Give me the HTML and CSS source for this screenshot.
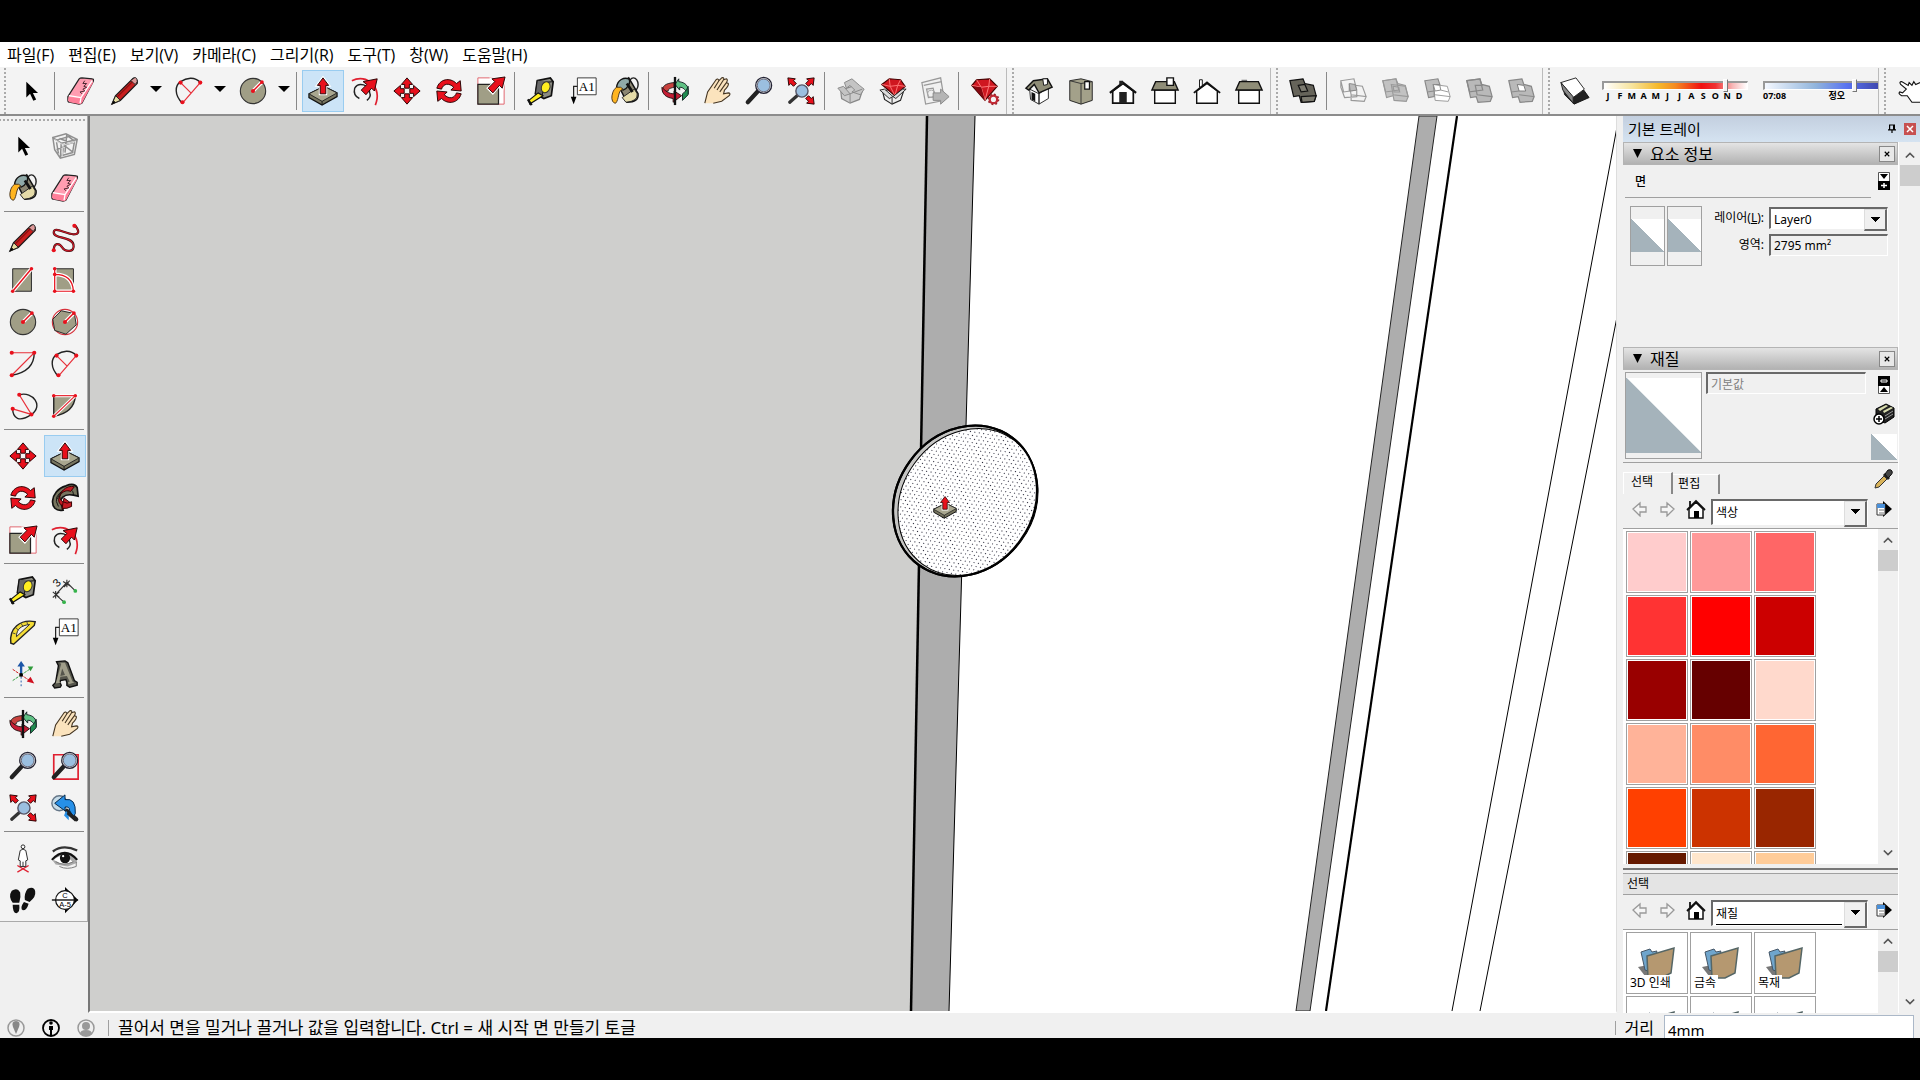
FILE: index.html
```html
<!DOCTYPE html>
<html lang="ko">

<head>
    <meta charset="UTF-8">
    <meta name="viewport" content="width=device-width, initial-scale=1.0">
    <title>SketchUp</title>
    <link rel="stylesheet" href="styles.css">
</head>

<body>
    <!-- Icon set -->
    <svg class="icon-defs" aria-hidden="true">
        <symbol id="i-select" viewBox="0 0 32 32">
            <path d="M11 6v17l4-4 3.500 7.500 3-1.500-3.500-7h5.500z" fill="#000" />
        </symbol>
        <symbol id="i-component" viewBox="0 0 32 32">
            <path d="M3 7l14-4 12 6-3 16-15 4-6-9zM3 7l9 6 17-4M12 13l-1 16M6 10l14-4 5 4M7 12l2 12M15 15l11-3-2 11-11 3zM10 8l8 3M18 3l-2 20M7 20l9-4 9 7" fill="none" stroke="#8f8f8f" stroke-width="1.600" />
            <path d="M5 9l9 6 12-3M14 15l-1 12" fill="none" stroke="#ddd" />
        </symbol>
        <symbol id="i-eraser" viewBox="0 0 32 32">
            <path d="M2 22L14 3q1-1 3-1l11 1q2 0 1 3L17 29q-1 1-3 1L4 28q-2 0-2-2z" fill="#ff9db1" stroke="#222" stroke-width="1.300" />
            <path d="M3 22l13 2L28 5l1 2-12 22-2 1-11-2-2-2z" fill="#ff7f99" />
            <path d="M3 21l13 2L28 5M16 23l-1 6" fill="none" stroke="#fff" stroke-width="1.400" />
            <path d="M20 5l-2 3 4 0-3 3 3 1-4 2 2 2-5 1 2 2" fill="none" stroke="#43222b" />
        </symbol>
        <symbol id="i-pencil" viewBox="0 0 32 32">
            <path d="M2 30l4-9L24 3q2-2 4 0t1 5L11 26z" fill="#c81e1e" stroke="#1b1b1b" stroke-width="1.300" />
            <path d="M2 30l4-9 5 5z" fill="#e9dfa5" stroke="#1b1b1b" />
            <path d="M2 30l2-4 2 2z" fill="#000" />
            <path d="M22 5l4-3q3-1 3 4l-2 3z" fill="#d99" stroke="#333" />
            <path d="M8 22L24 6" stroke="#811" stroke-width="1.500" />
        </symbol>
        <symbol id="i-freehand" viewBox="0 0 32 32">
            <path d="M27 3q7 9-2 9C17 12 4 3 4 10s19 4 21 13-9 8-12 3-9-5-9 3" fill="none" stroke="#3b1010" stroke-width="2.400" />
            <path d="M27 3q7 9-2 9C17 12 4 3 4 10s19 4 21 13-9 8-12 3-9-5-9 3" fill="none" stroke="#d01828" stroke-width="1.200" />
            <circle cx="26" cy="3" r="2.200" fill="#e8101c" />
            <circle cx="4" cy="29" r="2.200" fill="#e8101c" />
        </symbol>
        <symbol id="i-rect" viewBox="0 0 32 32">
            <path d="M5 4h20v24H5z" fill="#a09e86" stroke="#222" />
            <path d="M5 28L25 4" stroke="#fff" stroke-width="4" />
            <path d="M5 28L25 4" stroke="#e8101c" stroke-width="1.500" />
            <circle cx="5" cy="28" r="1.900" fill="#e8101c" />
            <circle cx="25" cy="4" r="1.900" fill="#e8101c" />
        </symbol>
        <symbol id="i-rotrect" viewBox="0 0 32 32">
            <path d="M5 4h20v24H5z" fill="#a09e86" stroke="#222" />
            <path d="M5 10q19 0 20 18H5V4" fill="none" stroke="#fff" stroke-width="4" />
            <path d="M5 10q19 0 20 18H5V4" fill="none" stroke="#e8101c" stroke-width="1.300" />
            <g fill="#e8101c">
                <circle cx="5" cy="4" r="1.900" />
                <circle cx="5" cy="10" r="1.900" />
                <circle cx="5" cy="28" r="1.900" />
                <circle cx="25" cy="28" r="1.900" />
            </g>
        </symbol>
        <symbol id="i-circle" viewBox="0 0 32 32">
            <circle cx="16" cy="16" r="13.500" fill="#a09e86" stroke="#333" stroke-width="1.200" />
            <path d="M16 16l9-9" stroke="#fff" stroke-width="4" />
            <path d="M16 16l9-9" stroke="#e8101c" stroke-width="1.500" />
            <circle cx="16" cy="16" r="2.200" fill="#e8101c" />
            <circle cx="25.500" cy="6.500" r="2" fill="#e8101c" />
        </symbol>
        <symbol id="i-polygon" viewBox="0 0 32 32">
            <circle cx="16" cy="16" r="13.500" fill="none" stroke="#d8303a" stroke-width="1.200" />
            <path d="M12 4l14 3 2 12-11 10L5 25 3 13z" fill="#a09e86" stroke="#222" />
            <path d="M16 16l9-9" stroke="#fff" stroke-width="4" />
            <path d="M16 16l9-9" stroke="#e8101c" stroke-width="1.500" />
            <circle cx="16" cy="16" r="2.200" fill="#e8101c" />
            <circle cx="25.500" cy="6.500" r="2" fill="#e8101c" />
        </symbol>
        <symbol id="i-arc" viewBox="0 0 32 32">
            <path d="M4 28Q28 24 28 4" fill="none" stroke="#222" stroke-width="1.500" />
            <path d="M4 4h24L4 28" fill="none" stroke="#e8303a" stroke-width="1.200" />
            <g fill="#e8101c">
                <circle cx="4" cy="4" r="2.200" />
                <circle cx="28" cy="4" r="2.200" />
                <circle cx="4" cy="28" r="2.200" />
            </g>
        </symbol>
        <symbol id="i-arc2" viewBox="0 0 32 32">
            <path d="M9 29C0 20 1 10 7 6S22 0 28 7" fill="none" stroke="#222" stroke-width="1.500" />
            <path d="M9 29L28 7M7 7l11 11" fill="none" stroke="#e8303a" stroke-width="1.300" />
            <g fill="#e8101c">
                <circle cx="7" cy="7" r="2.200" />
                <circle cx="28" cy="7" r="2.200" />
                <circle cx="9" cy="28" r="2.200" />
            </g>
        </symbol>
        <symbol id="i-arc3" viewBox="0 0 32 32">
            <path d="M12 4c15-4 26 12 13 21S5 29 5 19" fill="none" stroke="#222" stroke-width="1.500" />
            <path d="M12 4l13 21L5 19" fill="none" stroke="#e8303a" stroke-width="1.300" />
            <g fill="#e8101c">
                <circle cx="12" cy="4" r="2.200" />
                <circle cx="25" cy="25" r="2.200" />
                <circle cx="5" cy="19" r="2.200" />
            </g>
        </symbol>
        <symbol id="i-pie" viewBox="0 0 32 32">
            <path d="M4 5h23q-1 18-23 22z" fill="#a09e86" stroke="#222" stroke-width="1.500" />
            <path d="M4 5h23L4 27" fill="none" stroke="#fff" stroke-width="3.500" />
            <path d="M4 5h23L4 27" fill="none" stroke="#e8303a" stroke-width="1.300" />
            <g fill="#e8101c">
                <circle cx="4" cy="5" r="1.900" />
                <circle cx="27" cy="5" r="1.900" />
                <circle cx="4" cy="27" r="1.900" />
            </g>
        </symbol>
        <symbol id="i-pushpull" viewBox="0 0 32 32">
            <path d="M1 19l16-8 14 7v4L15 31 1 23z" fill="#77755f" stroke="#111" stroke-width="1.300" />
            <path d="M1 19l16-8 14 7-16 9z" fill="#a9a78f" stroke="#222" />
            <path d="M15 27v4" stroke="#111" />
            <path d="M16 2l6 8h-3v9h-6v-9h-3z" fill="#e8101c" stroke="#fff" stroke-width="3" />
            <path d="M16 2l6 8h-3v9h-6v-9h-3z" fill="#e8101c" stroke="#200" />
        </symbol>
        <symbol id="i-offset" viewBox="0 0 32 32">
            <path d="M2 5C18-3 35 12 27 31" fill="none" stroke="#e02030" stroke-width="1.800" />
            <path d="M5 13c4-7 16-4 16 5M18 26q5-4 3-8M5 13q-2 8 5 11" fill="none" stroke="#222" stroke-width="1.500" />
            <path d="M29 3l-3 13-3-3-6 7-5-5 6-6-4-3z" fill="#e8101c" stroke="#200" />
        </symbol>
        <symbol id="i-move" viewBox="0 0 32 32">
            <g fill="#e8101c" stroke="#200">
                <path d="M16 2l6 7h-3.500v4h-5V9H10z" />
                <path d="M16 30l6-7h-3.500v-4h-5v4H10z" />
                <path d="M2 16l7-6v3.500h4v5H9V22z" />
                <path d="M30 16l-7-6v3.500h-4v5h4V22z" />
            </g>
        </symbol>
        <symbol id="i-rotate" viewBox="0 0 32 32">
            <path d="M3 13C6 3 17 1 24 8l4-3 1 11-11-1 3-3C16 7 10 8 8 14z" fill="#e8101c" stroke="#200" />
            <path d="M29 19c-3 10-14 12-21 5l-4 3-1-11 11 1-3 3c5 5 11 4 13-2z" fill="#e8101c" stroke="#200" />
        </symbol>
        <symbol id="i-scale" viewBox="0 0 32 32">
            <path d="M2 2h28v28H2z" fill="#fff" stroke="#e0606a" />
            <path d="M2 9h22v21H2z" fill="#a09e86" stroke="#222" stroke-width="1.300" />
            <path d="M31 1l-3 12-3-3-7 8-5-5 7-7-3-3z" fill="#e8101c" stroke="#fff" stroke-width="3" />
            <path d="M31 1l-3 12-3-3-7 8-5-5 7-7-3-3z" fill="#e8101c" stroke="#200" />
        </symbol>
        <symbol id="i-follow" viewBox="0 0 32 32">
            <path d="M14 29C-2 32-1 8 17 3c5-2 10-2 12 2l1 9-5-1C15 11 8 17 13 25z" fill="#77755f" stroke="#111" stroke-width="1.800" />
            <path d="M25 13c0-12-15-5-17 4M9 25q-7-11 7-18" fill="none" stroke="#111" />
            <path d="M26 4c-11-3-21 12-12 16l1-4 8 6-10 6v-4C4 19 13 5 22 9z" fill="#c41922" stroke="#300" />
            <path d="M14 20q4 3 9 0v5q-5 3-10 2z" fill="#c41922" stroke="#300" />
        </symbol>
        <symbol id="i-tape" viewBox="0 0 32 32">
            <path d="M12 5l14-3 3 4-2 15-8 3-9-5z" fill="#8b8b82" stroke="#111" stroke-width="1.800" />
            <path d="M12 5l-2 14 7 3 3-15 9-1" fill="#666" stroke="#111" />
            <ellipse cx="21" cy="12" rx="4.500" ry="6" transform="rotate(20 21 12)" fill="#ffee20" stroke="#333" />
            <path d="M13 18L3 26l1 4 14-9z" fill="#ffee20" stroke="#111" stroke-width="1.300" />
            <path d="M2 25l4 6" stroke="#111" stroke-width="2.500" />
        </symbol>
        <symbol id="i-text" viewBox="0 0 32 32">
            <path d="M10 2h20v18H10z" fill="#fff" stroke="#333" />
            <path d="M10 11H6v12" fill="none" stroke="#222" stroke-width="1.300" />
            <path d="M3 22h6l-3 8z" />
            <text x="20" y="16" text-anchor="middle" class="glyph glyph-serif">A1</text>
        </symbol>
        <symbol id="i-paint" viewBox="0 0 32 32">
            <ellipse cx="25" cy="9" rx="5" ry="7" fill="none" stroke="#222" stroke-width="1.500" />
            <path d="M9 10L20 2l10 17q1 9-12 9z" fill="#8b8672" stroke="#111" stroke-width="1.500" />
            <path d="M13 23l13-9 3 5q1 8-12 9z" fill="#e5dba8" stroke="#222" />
            <path d="M7 12C8 4 15 1 20 3c3 4-2 11-6 12z" fill="#8fa9a8" stroke="#111" stroke-width="1.500" />
            <path d="M18 8l6 9" stroke="#111" stroke-width="3" />
            <path d="M14 14C8 15 10 25 6 29 0 29 1 16 7 12q5-1 7 2z" fill="#ffb520" stroke="#432" />
        </symbol>
        <symbol id="i-dim" viewBox="0 0 32 32">
            <path d="M6 21L18 8M3 18l7 6M3 24l7-6M14 7l8 5M15 13l6-7M18 5v8M6 17v8M6 21l9 8M18 8l9 9" fill="none" stroke="#333" stroke-width="1.200" />
            <text x="8" y="12" text-anchor="middle" transform="rotate(-45 8 9)" class="glyph">3</text>
            <circle cx="15" cy="29" r="2" fill="#35b34a" />
            <circle cx="27" cy="17" r="2" fill="#35b34a" />
        </symbol>
        <symbol id="i-protractor" viewBox="0 0 32 32">
            <path d="M3 28C1 12 13 2 29 5l-1 4L6 29z" fill="#f4dc35" stroke="#222" stroke-width="1.500" />
            <path d="M9 21c0-8 5-12 14-13z" fill="#f2f2f2" stroke="#222" />
            <path d="M5 17l3 1M8 11l3 3M14 7l2 3M20 5l1 3" stroke="#444" />
        </symbol>
        <symbol id="i-axes" viewBox="0 0 32 32">
            <path d="M14 17V5" stroke="#1c56a8" stroke-width="2.500" />
            <path d="M14 2l4 6h-8z" fill="#1c56a8" />
            <path d="M14 19v11" stroke="#1c56a8" stroke-dasharray="2" />
            <path d="M14 17l9-6M14 17L5 23" stroke="#2f9b3b" stroke-dasharray="3 1" />
            <path d="M27 8l-6 0 3 5z" fill="#2f9b3b" />
            <path d="M14 17l9 6M14 17l-9-6" stroke="#c11" stroke-dasharray="3 1" />
            <path d="M28 26l-8-2 4-5z" fill="#d01020" />
            <circle cx="14" cy="17" r="2" />
        </symbol>
        <symbol id="i-text3d" viewBox="0 0 32 32">
            <path d="M7 3l9-1 3 2 7 19 3 2v3l-8 2-3-2v-3l-1-3-6 1v3l1 2-1 2-6 1-2-3 3-3 3-18z" fill="#55554c" stroke="#111" stroke-width="1.500" />
            <path d="M10 4h6l8 20 2 1-6 2-1-2 2-1-3-6-7 1-1 5 2 1-6 1 1-3 5-18zM13 10l-2 8 5-1z" fill="#a09e8a" fill-rule="evenodd" />
        </symbol>
        <symbol id="i-orbit" viewBox="0 0 32 32">
            <path d="M15 7C5 8 2 11 3 17l6-1c-1-2 2-3 6-4z" fill="#c8413d" stroke="#222" />
            <path d="M2 12c0 8 5 11 12 12v4l9-7-8-5v3c-6 0-9-3-13-7z" fill="#c51d34" stroke="#211" />
            <path d="M30 19c1-9-3-12-10-13V3l-4 6 5 6v-3c4 0 5 2 9 7z" fill="#5fc184" stroke="#122" />
            <path d="M30 11v9l-6 6v-7q5-3 6-8z" fill="#208c50" stroke="#122" />
            <path d="M16 1v30" stroke="#111" stroke-width="2.500" />
        </symbol>
        <symbol id="i-pan" viewBox="0 0 32 32">
            <path d="M3 29L6 17l9-13q2-2 3 1l3-3q3-1 2 2l3-1q2 1 0 4l2 1q1 2-4 7l-1 4 5-1q3 0 1 3l-8 6-9 2z" fill="#fbe3bd" />
            <path d="M3 29L6 17l9-13q2-2 3 1l3-3q3-1 2 2l3-1q2 1 0 4l2 1q1 2-4 7l-1 4 5-1q3 0 1 3l-8 6-9 2M18 5l-5 8M23 4l-7 11M26 7l-7 10" fill="none" stroke="#443522" stroke-width="1.200" />
        </symbol>
        <symbol id="i-zoom" viewBox="0 0 32 32">
            <path d="M4 28l11-12" stroke="#222" stroke-width="4.500" stroke-linecap="round" />
            <circle cx="21" cy="10" r="8.500" fill="#ddd" stroke="#223" stroke-width="1.300" />
            <circle cx="21" cy="10" r="6.800" fill="#9bbfe0" stroke="#667" />
        </symbol>
        <symbol id="i-zoomwin" viewBox="0 0 32 32">
            <path d="M4 4h26v26H4z" fill="none" stroke="#e02030" stroke-width="1.800" />
            <path d="M4 28l11-12" stroke="#222" stroke-width="4.500" stroke-linecap="round" />
            <circle cx="21" cy="10" r="8.500" fill="#ddd" stroke="#223" stroke-width="1.300" />
            <circle cx="21" cy="10" r="6.800" fill="#9bbfe0" stroke="#667" />
        </symbol>
        <symbol id="i-zoomext" viewBox="0 0 32 32">
            <path d="M4 28l9-8" stroke="#333" stroke-width="3.500" stroke-linecap="round" />
            <circle cx="17" cy="16" r="6.500" fill="#9bbfe0" stroke="#556" stroke-width="1.500" />
            <g fill="#e8101c" stroke="#200">
                <path d="M2 2l8 1-2 2 3 3-3 3-3-3-2 2z" />
                <path d="M30 2l-8 1 2 2-3 3 3 3 3-3 2 2z" />
                <path d="M30 30l-8-1 2-2-3-3 3-3 3 3 2-2z" />
            </g>
        </symbol>
        <symbol id="i-previous" viewBox="0 0 32 32">
            <path d="M18 19l10 9" stroke="#222" stroke-width="4.500" stroke-linecap="round" />
            <circle cx="10" cy="11" r="8" fill="#c5dbe8" stroke="#678" stroke-width="1.500" />
            <path d="M5 11l11-9v5q12-2 11 15l-2 3-4-6q0-5-5-4v4z" fill="#2790e8" stroke="#024" />
            <path d="M15 24l5 5v-6l-3-4z" fill="#2790e8" />
            <path d="M19 21l9 8" stroke="#222" stroke-width="4" />
        </symbol>
        <symbol id="i-position" viewBox="0 0 32 32">
            <path d="M10 24l12 7M22 24l-12 7" stroke="#e02030" stroke-width="1.400" />
            <circle cx="16" cy="4" r="2" fill="#fff" stroke="#222" />
            <path d="M13 8q3-3 6 0l2 10-2 1v6h-6v-6l-2-1z" fill="#fff" stroke="#222" />
            <path d="M16 20v5" stroke="#222" />
        </symbol>
        <symbol id="i-look" viewBox="0 0 32 32">
            <path d="M3 9Q14 1 29 8" fill="none" stroke="#333" stroke-width="2.500" />
            <path d="M3 19q9-12 24-3l2 5-10 4-13-2z" fill="#aaa" />
            <path d="M4 18q10-9 20 2-11 5-16 0z" fill="#fff" />
            <path d="M2 18Q16 3 29 18" fill="none" stroke="#111" stroke-width="2.300" />
            <circle cx="16" cy="16" r="5.500" fill="#111" />
            <circle cx="14" cy="14" r="1.200" fill="#fff" />
            <path d="M6 20q9 5 19 0M10 25q8 4 18 0M28 20v5" fill="none" stroke="#777" />
        </symbol>
        <symbol id="i-walk" viewBox="0 0 32 32">
            <g fill="#111">
                <path d="M4 6q6-4 9 2 1 5-1 11l-7 0Q0 12 4 6zM5 21l7 0q1 8-3 9-4 0-4-9z" />
                <path d="M21 4q7-3 8 3 1 6-6 11l-5-2q-1-7 3-12zM17 18l5 2q-2 7-6 7-4-2 1-9z" />
            </g>
        </symbol>
        <symbol id="i-section" viewBox="0 0 32 32">
            <path d="M16 2l14 14-14 14" />
            <circle cx="16" cy="16" r="10" fill="#fff" stroke="#111" stroke-width="1.300" />
            <path d="M2 16h28" stroke="#111" stroke-width="1.500" />
            <text x="16" y="14" text-anchor="middle" class="glyph glyph-small">C</text>
            <text x="16" y="23" text-anchor="middle" class="glyph glyph-small">A-5</text>
        </symbol>
        <symbol id="i-getmodels" viewBox="0 0 32 32">
            <path d="M5 15l12-4 11 5-3 9-10 4-9-5z" fill="#ccc" stroke="#888" stroke-width="1.300" />
            <path d="M2 13l6-2 7 8-6 2zM9 7l8-4 8 7 5 4-4 6-9-3 3-2-5-5-4 3z" fill="#c4c4c4" stroke="#888" />
            <path d="M15 19l13-5M15 19v9" stroke="#888" />
        </symbol>
        <symbol id="i-ruby" viewBox="0 0 32 32">
            <path d="M5 17l11-5 11 5-3 9-9 4-8-5z" fill="#eee" stroke="#222" stroke-width="1.200" />
            <path d="M4 9l8-6 12 1 5 7-11 10z" fill="#cf1720" stroke="#400" stroke-width="1.200" />
            <path d="M4 9l9 2 5 10 3-11 8 1M12 3l1 8 8-1 3-6" fill="none" stroke="#f77" />
            <path d="M2 15l5-1 9 8-4 2zM30 14l-4 0-10 8 3 2z" fill="#ddd" stroke="#222" />
            <path d="M15 23v6" stroke="#222" />
        </symbol>
        <symbol id="i-share" viewBox="0 0 32 32">
            <path d="M2 7l20-5 4 24-20 4z" fill="#f0f0f0" stroke="#999" stroke-width="1.300" />
            <path d="M4 10l19-4M7 14l7-1 2 9-7 1z" fill="none" stroke="#999" stroke-width="1.300" />
            <circle cx="12" cy="19" r="4" fill="none" stroke="#aaa" />
            <path d="M14 18h8v-4l9 8-9 8v-4h-8z" fill="#b5b5b5" stroke="#888" />
        </symbol>
        <symbol id="i-extension" viewBox="0 0 32 32">
            <path d="M2 10l5-6 14-1 8 8-13 15z" fill="#cf1720" stroke="#400" stroke-width="1.300" />
            <path d="M2 10l10 2 4 14 4-15 9 0M7 4l5 8 8-1 1-8" fill="none" stroke="#ff8080" />
            <path d="M12 12l4 14-13-15z" fill="#850810" />
            <circle cx="25" cy="25" r="4" fill="#f3f3f3" stroke="#c22a35" stroke-width="2.500" />
            <circle cx="25" cy="25" r="5.500" fill="none" stroke="#9c2028" stroke-width="1.500" stroke-dasharray="2 2.300" />
        </symbol>
        <symbol id="i-iso" viewBox="0 0 32 32">
            <path d="M6 14l10 5v11L7 25zM16 19l10-7v12l-10 6z" fill="#fff" stroke="#222" />
            <path d="M2 13l8-8 15-2 5 9-14 6-5-9-6 6z" fill="#8f8d77" stroke="#111" stroke-width="1.500" />
            <path d="M20 3h5v6l-4 1z" fill="#fff" stroke="#111" />
            <path d="M8 17l4 2v8l-4-2z" fill="#111" />
        </symbol>
        <symbol id="i-top" viewBox="0 0 32 32">
            <path d="M4 5l12-2 12 3v20l-12 4-12-4z" fill="#a3a18a" stroke="#222" />
            <path d="M16 8v22M4 5l12 3 12-2" fill="none" stroke="#333" />
            <path d="M20 6h5v8h-5z" fill="#fff" stroke="#111" stroke-width="1.300" />
        </symbol>
        <symbol id="i-front" viewBox="0 0 32 32">
            <path d="M5 16L16 8l11 8v13H5z" fill="#fff" stroke="#111" stroke-width="1.800" />
            <path d="M2 18L16 7l14 11" fill="none" stroke="#111" stroke-width="2.300" />
            <path d="M12 17h8v12h-8zM12 5h4v4h-4z" fill="#222" />
        </symbol>
        <symbol id="i-right" viewBox="0 0 32 32">
            <path d="M5 15h22v14H5z" fill="#fff" stroke="#111" stroke-width="1.500" />
            <path d="M6 6h20l4 9H2z" fill="#8f8d77" stroke="#111" stroke-width="1.500" />
            <path d="M18 2h7v8h-7z" fill="#fff" stroke="#111" stroke-width="1.500" />
        </symbol>
        <symbol id="i-back" viewBox="0 0 32 32">
            <path d="M8 4h3v8H8z" fill="#fff" stroke="#111" />
            <path d="M5 16L16 8l11 8v13H5z" fill="#fff" stroke="#111" stroke-width="1.500" />
            <path d="M2 18L16 7l14 11" fill="none" stroke="#111" stroke-width="2" />
        </symbol>
        <symbol id="i-left" viewBox="0 0 32 32">
            <path d="M5 15h22v14H5z" fill="#fff" stroke="#111" stroke-width="1.500" />
            <path d="M8 4h6v3H8z" fill="#777" />
            <path d="M6 6h20l4 9H2z" fill="#8f8d77" stroke="#111" stroke-width="1.500" />
        </symbol>
        <symbol id="i-shell" viewBox="0 0 32 32">
            <path d="M2 5l14-2 2 5 9 2 3 11-2 6-14 1-2-7-6 1z" fill="#66645a" stroke="#111" stroke-width="1.300" />
            <path d="M11 10l7-1 3 7-7 1zM14 22l16-1-2 6-13 1z" fill="#7d7b70" stroke="#111" stroke-width="1.300" />
        </symbol>
        <symbol id="i-solid-a" viewBox="0 0 32 32">
            <path d="M3 5l14-2 3 12-14 2zM12 9l14 2 4 11-16-2zM3 5v7l4 11 13-1V15M14 20v6l14 1 2-5M12 9v7" fill="none" stroke="#999" stroke-width="1.200" />
            <path d="M12 8l6 1 2 6-7 1z" fill="#bbb" stroke="#888" />
        </symbol>
        <symbol id="i-solid-b" viewBox="0 0 32 32">
            <path d="M3 5l14-2 2 5 8 2 3 12-2 5-13-1-1-5-7 2z" fill="#c2c2c2" stroke="#999" stroke-width="1.200" />
            <path d="M3 5l14-2 3 12-14 2zM12 9l15 2 3 11-16-2zM14 11l6 1 1 5-6 0z" fill="none" stroke="#999" stroke-width="1.200" />
        </symbol>
        <symbol id="i-solid-c" viewBox="0 0 32 32">
            <path d="M12 9l15 2 3 11-2 5-14-1-1-10zM14 20l16 2M20 15l8 2" fill="#fff" stroke="#999" />
            <path d="M3 5l14-2 2 6-7 0 1 8v5l-6 1z" fill="#bdbdbd" stroke="#888" stroke-width="1.200" />
            <path d="M6 17l7-1" stroke="#888" />
            <path d="M12 9l7 1 1 5-6 1z" fill="#fff" stroke="#888" />
        </symbol>
        <symbol id="i-solid-d" viewBox="0 0 32 32">
            <path d="M3 5l14-2 2 6 8 2 3 11-2 5-13 1-2-6-6 1z" fill="#b9b9b9" stroke="#888" stroke-width="1.300" />
            <path d="M3 5l14-2 3 12-14 2zM20 10l-8 0 2 10 16 2" fill="none" stroke="#888" stroke-width="1.300" />
        </symbol>
        <symbol id="i-solid-e" viewBox="0 0 32 32">
            <path d="M3 5l14-2 2 6 8 2 3 11-2 5-13 1-2-6-6 1z" fill="#b9b9b9" stroke="#888" stroke-width="1.300" />
            <path d="M6 17l8-1M14 20l16 2" stroke="#888" />
            <path d="M12 9l7 1 2 6-7 0z" fill="#fff" stroke="#777" />
        </symbol>
        <symbol id="i-shadow" viewBox="0 0 32 32">
            <path d="M2 8l3 12 10 10 16-7-10-14z" fill="#222" stroke="#111" />
            <path d="M1 7l16-5 9 12-12 9z" fill="#fff" stroke="#222" />
            <path d="M1 7l2 8 11 14v-7z" fill="#888" stroke="#222" />
        </symbol>
        <symbol id="i-hand" viewBox="0 0 32 32">
            <path d="M26 7l-5 2-2-3-2 4-3-3-1 3-7-4q-3 0-1 3l6 5-4 4-3-1q-2 2 2 4l6 0 5 7h10" fill="#fff" stroke="#111" stroke-width="1.200" />
        </symbol>
        <symbol id="i-prev" viewBox="0 0 16 16">
            <path d="M1 8l7-6v4h6v5H8v4z" fill="#f5f5f5" stroke="#999" stroke-width="1.300" />
        </symbol>
        <symbol id="i-next" viewBox="0 0 16 16">
            <path d="M15 8L8 2v4H2v5h6v4z" fill="#f5f5f5" stroke="#999" stroke-width="1.300" />
        </symbol>
        <symbol id="i-home" viewBox="0 0 20 20">
            <path d="M3 10l7-7 7 7v9H3z" fill="#fff" stroke="#111" stroke-width="1.500" />
            <path d="M1 11l9-9 9 9M4 8V2" fill="none" stroke="#111" stroke-width="1.800" />
            <path d="M8 12h5v7H8z" />
        </symbol>
        <symbol id="i-details" viewBox="0 0 18 18">
            <path d="M8 1l9 8-9 8z" />
            <path d="M2 4h8v11H2z" fill="#fff" stroke="#333" />
            <path d="M2 4h8v4H2z" fill="#4a90d9" />
            <path d="M4 10h5M4 13h5" stroke="#777" />
        </symbol>
        <symbol id="i-up" viewBox="0 0 12 8">
            <path d="M1 7l5-5 5 5" fill="none" stroke="#555" stroke-width="2" />
        </symbol>
        <symbol id="i-down" viewBox="0 0 12 8">
            <path d="M1 1l5 5 5-5" fill="none" stroke="#555" stroke-width="2" />
        </symbol>
        <symbol id="i-folder" viewBox="0 0 40 34">
            <path d="M1 21l10-2v12l-3-1z" fill="#777" />
            <path d="M4 6l9-3 2 3 5-1-9 20-3-1z" fill="#6fa5cc" stroke="#456" />
            <path d="M10 10l27-8-3 25-10 5H11z" fill="#b59870" stroke="#566" stroke-width="1.500" />
        </symbol>
    </svg>

    <div class="app">
        <nav class="menubar">
            <button>파일(F)</button>
            <button>편집(E)</button>
            <button>보기(V)</button>
            <button>카메라(C)</button>
            <button>그리기(R)</button>
            <button>도구(T)</button>
            <button>창(W)</button>
            <button>도움말(H)</button>
        </nav>

        <div class="toolbar">
            <span class="grip grip-first"></span>
            <button class="tool" aria-label="선택"><svg><use href="#i-select" /></svg></button>
            <span class="sep"></span>
            <button class="tool" aria-label="지우개"><svg><use href="#i-eraser" /></svg></button>
            <div class="split">
                <button class="tool" aria-label="선"><svg><use href="#i-pencil" /></svg></button>
                <button class="drop" aria-label="선 도구"></button>
            </div>
            <div class="split">
                <button class="tool" aria-label="호"><svg><use href="#i-arc2" /></svg></button>
                <button class="drop" aria-label="호 도구"></button>
            </div>
            <div class="split">
                <button class="tool" aria-label="원"><svg><use href="#i-circle" /></svg></button>
                <button class="drop" aria-label="도형 도구"></button>
            </div>
            <span class="sep"></span>
            <button class="tool active" aria-label="밀기/끌기"><svg><use href="#i-pushpull" /></svg></button>
            <button class="tool" aria-label="오프셋"><svg><use href="#i-offset" /></svg></button>
            <button class="tool" aria-label="이동"><svg><use href="#i-move" /></svg></button>
            <button class="tool" aria-label="회전"><svg><use href="#i-rotate" /></svg></button>
            <button class="tool" aria-label="배율"><svg><use href="#i-scale" /></svg></button>
            <span class="sep"></span>
            <button class="tool" aria-label="줄자"><svg><use href="#i-tape" /></svg></button>
            <button class="tool" aria-label="텍스트"><svg><use href="#i-text" /></svg></button>
            <button class="tool" aria-label="페인트통"><svg><use href="#i-paint" /></svg></button>
            <span class="sep"></span>
            <button class="tool" aria-label="궤도"><svg><use href="#i-orbit" /></svg></button>
            <button class="tool" aria-label="이동 보기"><svg><use href="#i-pan" /></svg></button>
            <button class="tool" aria-label="확대/축소"><svg><use href="#i-zoom" /></svg></button>
            <button class="tool" aria-label="범위 확대"><svg><use href="#i-zoomext" /></svg></button>
            <span class="sep"></span>
            <button class="tool" aria-label="모델 가져오기"><svg><use href="#i-getmodels" /></svg></button>
            <button class="tool" aria-label="확장 웨어하우스"><svg><use href="#i-ruby" /></svg></button>
            <button class="tool" aria-label="모델 공유"><svg><use href="#i-share" /></svg></button>
            <span class="sep"></span>
            <button class="tool" aria-label="확장 관리자"><svg><use href="#i-extension" /></svg></button>
            <span class="grip"></span>
            <button class="tool" aria-label="등각"><svg><use href="#i-iso" /></svg></button>
            <button class="tool" aria-label="위"><svg><use href="#i-top" /></svg></button>
            <button class="tool" aria-label="앞"><svg><use href="#i-front" /></svg></button>
            <button class="tool" aria-label="오른쪽"><svg><use href="#i-right" /></svg></button>
            <button class="tool" aria-label="뒤"><svg><use href="#i-back" /></svg></button>
            <button class="tool" aria-label="왼쪽"><svg><use href="#i-left" /></svg></button>
            <span class="grip"></span>
            <button class="tool" aria-label="외부 셸"><svg><use href="#i-shell" /></svg></button>
            <span class="sep"></span>
            <button class="tool" aria-label="교차"><svg><use href="#i-solid-a" /></svg></button>
            <button class="tool" aria-label="결합"><svg><use href="#i-solid-b" /></svg></button>
            <button class="tool" aria-label="빼기"><svg><use href="#i-solid-c" /></svg></button>
            <button class="tool" aria-label="트리밍"><svg><use href="#i-solid-d" /></svg></button>
            <button class="tool" aria-label="분할"><svg><use href="#i-solid-e" /></svg></button>
            <span class="grip"></span>
            <button class="tool" aria-label="그림자"><svg><use href="#i-shadow" /></svg></button>
            <div class="shadow-month">
                <input type="range" min="0" max="100" value="86" aria-label="날짜">
                <div class="ticks">
                    <span>J</span><span>F</span><span>M</span><span>A</span><span>M</span><span>J</span><span>J</span><span>A</span><span>S</span><span>O</span><span>N</span><span>D</span>
                </div>
            </div>
            <div class="shadow-time">
                <input type="range" min="0" max="100" value="81" aria-label="시간">
                <div class="ticks"><span>07:08</span><span>정오</span></div>
            </div>
            <span class="grip"></span>
            <button class="tool" aria-label="상호 작용"><svg><use href="#i-hand" /></svg></button>
        </div>

        <div class="workspace">
            <aside class="side">
                <div class="palette">
                    <button class="tool" aria-label="선택"><svg><use href="#i-select" /></svg></button>
                    <button class="tool" aria-label="구성 요소"><svg><use href="#i-component" /></svg></button>
                    <button class="tool" aria-label="페인트통"><svg><use href="#i-paint" /></svg></button>
                    <button class="tool" aria-label="지우개"><svg><use href="#i-eraser" /></svg></button>
                    <hr>
                    <button class="tool" aria-label="선"><svg><use href="#i-pencil" /></svg></button>
                    <button class="tool" aria-label="자유형"><svg><use href="#i-freehand" /></svg></button>
                    <button class="tool" aria-label="직사각형"><svg><use href="#i-rect" /></svg></button>
                    <button class="tool" aria-label="회전 직사각형"><svg><use href="#i-rotrect" /></svg></button>
                    <button class="tool" aria-label="원"><svg><use href="#i-circle" /></svg></button>
                    <button class="tool" aria-label="다각형"><svg><use href="#i-polygon" /></svg></button>
                    <button class="tool" aria-label="호"><svg><use href="#i-arc" /></svg></button>
                    <button class="tool" aria-label="2점 호"><svg><use href="#i-arc2" /></svg></button>
                    <button class="tool" aria-label="3점 호"><svg><use href="#i-arc3" /></svg></button>
                    <button class="tool" aria-label="파이"><svg><use href="#i-pie" /></svg></button>
                    <hr>
                    <button class="tool" aria-label="이동"><svg><use href="#i-move" /></svg></button>
                    <button class="tool active" aria-label="밀기/끌기"><svg><use href="#i-pushpull" /></svg></button>
                    <button class="tool" aria-label="회전"><svg><use href="#i-rotate" /></svg></button>
                    <button class="tool" aria-label="따라가기"><svg><use href="#i-follow" /></svg></button>
                    <button class="tool" aria-label="배율"><svg><use href="#i-scale" /></svg></button>
                    <button class="tool" aria-label="오프셋"><svg><use href="#i-offset" /></svg></button>
                    <hr>
                    <button class="tool" aria-label="줄자"><svg><use href="#i-tape" /></svg></button>
                    <button class="tool" aria-label="치수"><svg><use href="#i-dim" /></svg></button>
                    <button class="tool" aria-label="각도기"><svg><use href="#i-protractor" /></svg></button>
                    <button class="tool" aria-label="텍스트"><svg><use href="#i-text" /></svg></button>
                    <button class="tool" aria-label="축"><svg><use href="#i-axes" /></svg></button>
                    <button class="tool" aria-label="3D 텍스트"><svg><use href="#i-text3d" /></svg></button>
                    <hr>
                    <button class="tool" aria-label="궤도"><svg><use href="#i-orbit" /></svg></button>
                    <button class="tool" aria-label="이동 보기"><svg><use href="#i-pan" /></svg></button>
                    <button class="tool" aria-label="확대/축소"><svg><use href="#i-zoom" /></svg></button>
                    <button class="tool" aria-label="창 확대"><svg><use href="#i-zoomwin" /></svg></button>
                    <button class="tool" aria-label="범위 확대"><svg><use href="#i-zoomext" /></svg></button>
                    <button class="tool" aria-label="이전"><svg><use href="#i-previous" /></svg></button>
                    <hr>
                    <button class="tool" aria-label="카메라 배치"><svg><use href="#i-position" /></svg></button>
                    <button class="tool" aria-label="둘러보기"><svg><use href="#i-look" /></svg></button>
                    <button class="tool" aria-label="걷기"><svg><use href="#i-walk" /></svg></button>
                    <button class="tool" aria-label="단면"><svg><use href="#i-section" /></svg></button>
                </div>
            </aside>

            <main class="viewport">
                <svg viewBox="0 -1 1526 895" preserveAspectRatio="xMinYMin slice">
                    <defs>
                        <pattern id="dots" width="4" height="8" patternUnits="userSpaceOnUse">
                            <rect width="4" height="8" fill="#fff" />
                            <rect x="0" y="1" width="1" height="1" fill="#223" />
                            <rect x="2" y="5" width="1" height="1" fill="#223" />
                        </pattern>
                    </defs>
                    <path d="M0-1h837l-16 895H0z" fill="#cfcfcd" />
                    <path d="M837-1h48l-26 895h-38z" fill="#adadad" />
                    <path d="M837-1l-16 895" stroke="#000" stroke-width="2.500" />
                    <path d="M885-1l-26 895" stroke="#000" />
                    <path d="M1329-1h18l-127 895h-14z" fill="#adadad" stroke="#222" />
                    <path d="M1367-1l-131 895" stroke="#000" stroke-width="2.200" />
                    <path d="M1527 10l-165 884M1527 200l-137 694" fill="none" stroke="#000" />
                    <!-- Face being pulled -->
                    <ellipse cx="875" cy="384" rx="79" ry="68" transform="rotate(-54 875 384)" fill="#c6c6c4" stroke="#000" stroke-width="2.200" />
                    <ellipse cx="878" cy="385" rx="77" ry="66" transform="rotate(-54 878 385)" fill="url(#dots)" stroke="#000" />
                    <ellipse cx="875" cy="384" rx="79" ry="68" transform="rotate(-54 875 384)" fill="none" stroke="#000" stroke-width="2.200" />
                    <use href="#i-pushpull" x="843" y="378" width="24" height="24" />
                </svg>
            </main>

            <aside class="tray">
                <header class="tray-title">
                    <h1>기본 트레이</h1>
                    <button class="pin" aria-label="고정">
                        <svg viewBox="0 0 10 12"><path d="M2 7V1h6v6M0 7h10M5 7v4M7 1v6" fill="none" stroke="#000" stroke-width="1.500" /></svg>
                    </button>
                    <button class="tray-close" aria-label="닫기">
                        <svg viewBox="0 0 8 8"><path d="M1 1l6 6M7 1L1 7" stroke="#fff" stroke-width="1.500" /></svg>
                    </button>
                </header>
                <div class="tray-body">
                    <div class="panels">
                        <section class="entity">
                            <header class="panel-title">
                                <h2>요소 정보</h2>
                                <button aria-label="닫기"><svg viewBox="0 0 8 8"><path d="M1 1l6 6M7 1L1 7" stroke="#000" stroke-width="1.500" /></svg></button>
                            </header>
                            <div class="entity-head">
                                <h3>면</h3>
                                <button class="toggle" aria-label="세부 정보">
                                    <svg viewBox="0 0 12 18"><path d="M.5.5h11v17H.5z" fill="#fff" stroke="#555" /><path d="M0 9h12v9H0zM2 2h8L6 7z" /><path d="M6 11v5M3 13.500h6" stroke="#fff" stroke-width="1.500" /></svg>
                                </button>
                            </div>
                            <div class="entity-body">
                                <div class="face"></div>
                                <div class="face"></div>
                                <div class="fields">
                                    <label for="layer">레이어(<u>L</u>):</label>
                                    <div class="combo">
                                        <select id="layer"><option>Layer0</option></select>
                                    </div>
                                    <label for="area">영역:</label>
                                    <input id="area" class="field" value="2795 mm²" readonly>
                                </div>
                            </div>
                        </section>

                        <section class="materials">
                            <header class="panel-title">
                                <h2>재질</h2>
                                <button aria-label="닫기"><svg viewBox="0 0 8 8"><path d="M1 1l6 6M7 1L1 7" stroke="#000" stroke-width="1.500" /></svg></button>
                            </header>
                            <div class="material-head">
                                <div class="face face-large"></div>
                                <input class="field" value="기본값" aria-label="재질 이름" disabled>
                                <div class="material-actions">
                                    <button class="toggle" aria-label="보조 창">
                                        <svg viewBox="0 0 12 18"><path d="M.5.5h11v17H.5z" fill="#fff" stroke="#555" /><path d="M0 0h12v10H0zM2 16h8l-4-5z" /><path d="M3 4h6v2H3z" fill="none" stroke="#fff" /></svg>
                                    </button>
                                    <button class="create" aria-label="재질 만들기">
                                        <svg viewBox="0 0 22 22"><path d="M3 6l10-5 8 4v9l-9 6-9-4z" fill="#222" stroke="#000" /><path d="M5 6l8-4 2 1-8 5zM10 8l8-4 2 1-9 5z" fill="#d8dcae" /><path d="M12 13l8-5M12 16l8-5" stroke="#999" /><circle cx="6" cy="16" r="5" fill="#fff" stroke="#000" stroke-width="1.500" /><path d="M6 13v6M3 16h6" stroke="#000" stroke-width="1.500" /></svg>
                                    </button>
                                    <div class="default-face"></div>
                                </div>
                            </div>
                            <div class="tabs">
                                <button class="tab selected">선택</button>
                                <button class="tab">편집</button>
                                <button class="picker" aria-label="샘플 페인트">
                                    <svg viewBox="0 0 20 20"><path d="M2 19l1-4 8-8 3 3-8 8z" fill="#d9b35a" stroke="#333" /><path d="M11 5l5 5" stroke="#222" stroke-width="3" /><path d="M12 5l3-4q3-1 4 1t-1 4l-3 3z" fill="#444" stroke="#111" /></svg>
                                </button>
                            </div>
                            <div class="browse">
                                <button class="nav" aria-label="뒤로"><svg><use href="#i-prev" /></svg></button>
                                <button class="nav" aria-label="앞으로"><svg><use href="#i-next" /></svg></button>
                                <button class="home" aria-label="모델에서"><svg><use href="#i-home" /></svg></button>
                                <div class="combo">
                                    <select aria-label="컬렉션"><option>색상</option></select>
                                </div>
                                <button class="details" aria-label="세부 정보"><svg><use href="#i-details" /></svg></button>
                            </div>
                            <div class="list swatch-list">
                                <div class="grid">
                                    <i></i><i></i><i></i>
                                    <i></i><i></i><i></i>
                                    <i></i><i></i><i></i>
                                    <i></i><i></i><i></i>
                                    <i></i><i></i><i></i>
                                    <i></i><i></i><i></i>
                                </div>
                                <div class="scroll">
                                    <svg><use href="#i-up" /></svg>
                                    <span class="thumb"></span>
                                    <svg class="end"><use href="#i-down" /></svg>
                                </div>
                            </div>
                            <h3 class="sub-title">선택</h3>
                            <div class="browse">
                                <button class="nav" aria-label="뒤로"><svg><use href="#i-prev" /></svg></button>
                                <button class="nav" aria-label="앞으로"><svg><use href="#i-next" /></svg></button>
                                <button class="home" aria-label="모델에서"><svg><use href="#i-home" /></svg></button>
                                <div class="combo combo-line">
                                    <select aria-label="라이브러리"><option>재질</option></select>
                                </div>
                                <button class="details" aria-label="세부 정보"><svg><use href="#i-details" /></svg></button>
                            </div>
                            <div class="list folder-list">
                                <div class="grid">
                                    <button class="folder"><svg><use href="#i-folder" /></svg><span>3D 인쇄</span></button>
                                    <button class="folder"><svg><use href="#i-folder" /></svg><span>금속</span></button>
                                    <button class="folder"><svg><use href="#i-folder" /></svg><span>목재</span></button>
                                    <button class="folder" aria-label="벽돌"><svg><use href="#i-folder" /></svg></button>
                                    <button class="folder" aria-label="석재"><svg><use href="#i-folder" /></svg></button>
                                    <button class="folder" aria-label="타일"><svg><use href="#i-folder" /></svg></button>
                                </div>
                                <div class="scroll">
                                    <svg><use href="#i-up" /></svg>
                                    <span class="thumb"></span>
                                </div>
                            </div>
                        </section>
                    </div>
                    <div class="scroll tray-scroll">
                        <svg><use href="#i-up" /></svg>
                        <span class="thumb"></span>
                        <svg class="end"><use href="#i-down" /></svg>
                    </div>
                </div>
            </aside>
        </div>

        <footer class="status">
            <svg viewBox="0 0 20 20"><circle cx="10" cy="10" r="8" fill="none" stroke="#999" stroke-width="1.500" /><path d="M10 3q5 0 3 6l-3 7-3-7q-2-6 3-6z" fill="#888" /></svg>
            <svg viewBox="0 0 20 20"><circle cx="10" cy="10" r="8" fill="none" stroke="#000" stroke-width="1.800" /><circle cx="10" cy="5" r="1.800" /><path d="M8 8h4v4h-1v5H9v-5H8z" /></svg>
            <svg viewBox="0 0 20 20"><circle cx="10" cy="10" r="8" fill="none" stroke="#999" stroke-width="1.500" /><circle cx="10" cy="8" r="4" fill="#999" /><path d="M4 16q0-4 6-4t6 4q-6 5-12 0z" fill="#999" /></svg>
            <p>끌어서 면을 밀거나 끌거나 값을 입력합니다. Ctrl = 새 시작 면 만들기 토글</p>
            <label for="distance">거리</label>
            <input id="distance" value="4mm">
        </footer>
    </div>
</body>

</html>
```
FILE: styles.css
```css
:root {
    --bg: #f0f0f0;
    --bar: #f3f3f3;
    --line: #a0a0a0;
    --dark: #696969;
    --face: #a5b3bb;
    --active: #cce4f7;
    --active-line: #99ccf0;
}

* {
    box-sizing: border-box;
    margin: 0;
    padding: 0;
}

body {
    background: #000;
    color: #000;
    height: 100vh;
    padding: 42px 0;
    font-family: "Noto Sans", "Noto Sans CJK KR", sans-serif;
    font-size: 12px;
    overflow: hidden;
}

button {
    background: none;
    border: none;
    font: inherit;
    color: inherit;
}

svg {
    display: block;
}

.icon-defs {
    display: none;
}

.glyph {
    font-family: "Liberation Sans", sans-serif;
    font-size: 12px;
}

.glyph-serif {
    font-family: "Liberation Serif", serif;
    font-size: 14px;
}

.glyph-small {
    font-size: 8px;
}

.app {
    display: flex;
    flex-direction: column;
    height: 100%;
    background: var(--bg);
    overflow: hidden;
}

/* Menu */

.menubar {
    display: flex;
    flex: none;
    gap: 14px;
    height: 25px;
    padding: 0 7px;
    background: #fff;
    font-family: "Open Sans", "Noto Sans CJK KR", sans-serif;
    font-size: 16px;
    line-height: 27px;
}

.menubar button {
    white-space: nowrap;
}

/* Toolbars */

.toolbar {
    display: flex;
    flex: none;
    align-items: center;
    height: 49px;
    padding-top: 1px;
    background: var(--bar);
    border-bottom: 2px solid #8c8c8c;
    overflow: hidden;
}

.tool {
    display: flex;
    flex: none;
    align-items: center;
    justify-content: center;
    width: 42px;
    height: 42px;
    border: 1px solid transparent;
}

.tool svg {
    width: 30px;
    height: 30px;
}

.tool.active {
    background: var(--active);
    border-color: var(--active-line);
}

.sep {
    flex: none;
    width: 8px;
    height: 38px;
    background: linear-gradient(#888, #888) 2px 0 / 1px 100% no-repeat;
}

.grip {
    flex: none;
    width: 12px;
    height: 46px;
    border-left: 1px solid #bbb;
    background: radial-gradient(circle, #aaa 1px, transparent 1px) 4px 3px / 4px 4px repeat-y;
}

.grip-first {
    width: 10px;
    border-left: none;
    background-position: 3px 3px;
}

.split {
    display: flex;
    flex: none;
    align-items: center;
    padding-left: 2px;
}

.drop {
    width: 20px;
    height: 42px;
}

.drop::before {
    content: "";
    display: block;
    margin: 0 auto 4px 4px;
    width: 12px;
    height: 6px;
    background: #000;
    clip-path: polygon(0 0, 100% 0, 50% 100%);
}

.shadow-month,
.shadow-time {
    flex: none;
    width: 146px;
    margin: 0 9px 0 6px;
}

.shadow-time {
    width: 115px;
    margin: 0 0 0 6px;
}

input[type="range"] {
    appearance: none;
    display: block;
    width: 100%;
    height: 9px;
    border: 1px solid #fff;
    border-top: 2px solid #999;
    border-left: 2px solid #999;
    background: linear-gradient(90deg, #fff, #f7e39a 20%, #f5b82a 38%, #f58a20 50%, #f01010 68%, #f03030 78%, #f8b8b8 90%, #fff);
}

.shadow-time input[type="range"] {
    border-right: none;
    background: linear-gradient(90deg, #f4f8ff, #90b4dc 45%, #5a74f0 72%, #3f48b0);
}

input[type="range"]::-webkit-slider-thumb {
    appearance: none;
    width: 5px;
    height: 13px;
    background: #f3f3f3;
    border: 1px solid #fff;
    border-right-color: #777;
    border-bottom-color: #777;
}

.ticks {
    display: flex;
    height: 12px;
    font-size: 9px;
    font-weight: bold;
    line-height: 12px;
}

.shadow-month .ticks {
    padding-right: 3px;
}

.shadow-month .ticks span {
    flex: 1;
    text-align: center;
}

.shadow-time .ticks {
    justify-content: space-between;
    padding-right: 33px;
}

/* Work area */

.workspace {
    display: flex;
    flex: 1;
    min-height: 0;
}

.side {
    flex: none;
    width: 88px;
}

.palette {
    display: flex;
    flex-wrap: wrap;
    padding: 9px 1px 0 2px;
    border-right: 1px solid #aaa;
    border-bottom: 1px solid #aaa;
    background: radial-gradient(circle, #aaa 1px, transparent 1px) 2px 2px / 4px 4px repeat-x var(--bar);
}

.palette hr {
    width: 80px;
    height: 1px;
    margin: 2px 2px 5px;
    border: none;
    background: #888;
}

.viewport {
    flex: 1;
    min-width: 0;
    border-left: 2px solid #777;
    border-right: 1px solid #ddd;
    border-bottom: 2px solid #fff;
    background: #fff;
    overflow: hidden;
}

.viewport svg {
    width: 100%;
    height: 100%;
}

/* Tray */

.tray {
    display: flex;
    flex: none;
    flex-direction: column;
    width: 303px;
    padding-left: 6px;
}

.tray-title {
    display: flex;
    flex: none;
    align-items: center;
    height: 26px;
    padding: 0 4px 1px 5px;
    background: linear-gradient(#c3cfdf, #d5e3f1);
}

.tray-title h1 {
    flex: 1;
    font-size: 15px;
    font-weight: normal;
    line-height: 22px;
}

.pin svg {
    width: 8px;
    height: 10px;
}

.tray-close {
    width: 12px;
    height: 12px;
    margin-left: 8px;
    padding: 2px;
    background: #c75050;
}

.tray-body {
    display: flex;
    flex: 1;
    min-height: 0;
}

.panels {
    display: flex;
    flex: 1;
    flex-direction: column;
    min-width: 0;
    border-right: 1px solid #fff;
}

.panel-title {
    display: flex;
    flex: none;
    align-items: center;
    height: 23px;
    padding: 0 2px 0 9px;
    border: 1px solid #b4b4b4;
    background: linear-gradient(#e4e4e4, #b2b2b2);
}

.panel-title::before {
    content: "";
    width: 9px;
    height: 9px;
    background: #000;
    clip-path: polygon(0 0, 100% 0, 50% 100%);
}

.panel-title h2 {
    flex: 1;
    padding-left: 8px;
    font-size: 16px;
    font-weight: normal;
    line-height: 20px;
}

.panel-title button {
    width: 16px;
    height: 16px;
    padding: 4px;
    border: 1px solid #888;
    background: #e8e8e8;
}

.entity {
    flex: none;
    min-height: 205px;
}

.entity-head {
    display: flex;
    align-items: center;
    justify-content: space-between;
    height: 32px;
    padding: 0 8px 0 12px;
}

.entity-head h3 {
    font-size: 12px;
    font-weight: 500;
}

.toggle svg {
    width: 12px;
    height: 18px;
}

.entity-body {
    display: flex;
    gap: 2px;
    margin: 0 10px 0 2px;
    padding: 9px 0 0 5px;
    background: linear-gradient(var(--line), var(--line)) 0 0 / 246px 1px no-repeat;
}

.face {
    flex: none;
    width: 35px;
    height: 60px;
    border: 1px solid var(--line);
    padding: 12px 0 13px;
    background: linear-gradient(to top right, var(--face) 50%, #fff 51%) content-box;
}

.face-large {
    width: 77px;
    height: 87px;
    padding: 5px 0;
}

.fields {
    display: grid;
    flex: 1;
    grid-template-columns: 60px 1fr;
    grid-auto-rows: 22px;
    gap: 5px;
    padding-top: 1px;
    line-height: 22px;
}

.fields label {
    text-align: right;
    white-space: nowrap;
}

.combo {
    position: relative;
    border: 1px solid #fff;
    border-top: 2px solid var(--dark);
    border-left: 2px solid var(--dark);
    background: #fff;
}

.combo select {
    appearance: none;
    display: block;
    width: 100%;
    height: 100%;
    padding: 0 22px 0 3px;
    border: none;
    background: none;
    font: inherit;
}

.combo::after {
    content: "";
    position: absolute;
    top: 0;
    right: 0;
    width: 20px;
    height: 100%;
    border: 1px solid #ddd;
    border-right: 2px solid var(--dark);
    border-bottom: 2px solid var(--dark);
    background: linear-gradient(#000, #000) 50% 7px / 9px 1px no-repeat,
        linear-gradient(#000, #000) 50% 8px / 7px 1px no-repeat,
        linear-gradient(#000, #000) 50% 9px / 5px 1px no-repeat,
        linear-gradient(#000, #000) 50% 10px / 3px 1px no-repeat,
        linear-gradient(#000, #000) 50% 11px / 1px 1px no-repeat,
        var(--bg);
    pointer-events: none;
}

.field {
    min-width: 0;
    height: 22px;
    padding: 0 3px;
    border: 1px solid #fff;
    border-top: 2px solid var(--dark);
    border-left: 2px solid var(--dark);
    background: var(--bg);
    font: inherit;
}

.field:disabled {
    color: #808080;
}

.materials {
    display: flex;
    flex: 1;
    flex-direction: column;
    min-height: 0;
}

.material-head {
    display: flex;
    flex: none;
    gap: 4px;
    height: 93px;
    padding: 2px 1px 0 2px;
    border-bottom: 1px solid var(--line);
}

.material-head .field {
    flex: 1;
}

.material-actions {
    display: flex;
    flex: none;
    flex-direction: column;
    align-items: center;
    gap: 9px;
    width: 27px;
    padding-top: 4px;
}

.create svg {
    width: 22px;
    height: 22px;
}

.default-face {
    width: 26px;
    height: 26px;
    background: linear-gradient(to top right, var(--face) 50%, #fff 51%);
}

.tabs {
    display: flex;
    flex: none;
    align-items: flex-end;
    height: 31px;
}

.tab {
    height: 20px;
    padding: 0 18px 2px 5px;
    border-top: 1px solid #fff;
    border-right: 2px solid #888;
    line-height: 16px;
}

.tab.selected {
    height: 22px;
    padding: 0 18px 4px 7px;
    border-left: 1px solid #fff;
}

.picker {
    margin: 0 5px 5px auto;
}

.picker svg {
    width: 20px;
    height: 20px;
}

.browse {
    display: flex;
    flex: none;
    align-items: center;
    height: 35px;
    padding: 0 5px 4px 9px;
    border-bottom: 1px solid var(--line);
}

.nav svg {
    width: 16px;
    height: 16px;
    margin-right: 11px;
}

.home svg {
    width: 20px;
    height: 20px;
}

.browse .combo {
    flex: 1;
    height: 26px;
    margin: 6px 7px 0 5px;
}

.combo-line select {
    background: linear-gradient(#000, #000) 3px 100% / 126px 1px no-repeat;
}

.details svg {
    width: 18px;
    height: 18px;
}

.list {
    display: flex;
    background: #fff;
    overflow: hidden;
}

.swatch-list {
    flex: 1;
}

.folder-list {
    flex: none;
    height: 83px;
}

.grid {
    display: grid;
    flex: 1;
    grid-template-columns: repeat(3, 62px);
    grid-auto-rows: 62px;
    gap: 2px;
    padding: 2px 3px;
}

.grid i {
    border: 1px solid var(--line);
    padding: 1px;
    background: #fcc content-box;
}

.grid i:nth-child(2) { background-color: #ff9999; }
.grid i:nth-child(3) { background-color: #ff6666; }
.grid i:nth-child(4) { background-color: #ff3333; }
.grid i:nth-child(5) { background-color: #ff0000; }
.grid i:nth-child(6) { background-color: #cc0000; }
.grid i:nth-child(7) { background-color: #990000; }
.grid i:nth-child(8) { background-color: #660000; }
.grid i:nth-child(9) { background-color: #ffd9cc; }
.grid i:nth-child(10) { background-color: #ffb399; }
.grid i:nth-child(11) { background-color: #ff8c66; }
.grid i:nth-child(12) { background-color: #ff6633; }
.grid i:nth-child(13) { background-color: #ff4000; }
.grid i:nth-child(14) { background-color: #cc3300; }
.grid i:nth-child(15) { background-color: #992600; }
.grid i:nth-child(16) { background-color: #661a00; }
.grid i:nth-child(17) { background-color: #ffe6cc; }
.grid i:nth-child(18) { background-color: #ffcc99; }

.folder {
    position: relative;
    border: 1px solid var(--line);
}

.folder svg {
    width: 40px;
    height: 34px;
    margin: 0 auto;
}

.folder span {
    position: absolute;
    left: 1px;
    bottom: 3px;
    padding: 0 2px;
    background: #fff;
    line-height: 15px;
}

.scroll {
    display: flex;
    flex: none;
    flex-direction: column;
    align-items: center;
    width: 20px;
    padding: 7px 0;
    background: var(--bg);
}

.scroll svg {
    width: 10px;
    height: 8px;
}

.scroll .thumb {
    width: 20px;
    height: 21px;
    margin-top: 6px;
    background: #cdcdcd;
}

.scroll .end {
    margin-top: auto;
}

.tray-scroll {
    width: 21px;
    padding-top: 9px;
}

.sub-title {
    flex: none;
    height: 27px;
    margin-top: 4px;
    padding: 4px 4px 0;
    border-top: 2px solid #777;
    border-bottom: 1px solid var(--line);
    background: linear-gradient(var(--bg) 3px, var(--line) 3px, var(--line) 4px, #e4e4e4 4px);
    font-size: 12px;
    font-weight: normal;
    line-height: 20px;
}

/* Status bar */

.status {
    display: flex;
    flex: none;
    align-items: center;
    gap: 15px;
    height: 25px;
    padding: 5px 6px 0;
    font-size: 17px;
    line-height: 20px;
}

.status svg {
    flex: none;
    width: 20px;
    height: 20px;
}

.status p {
    flex: 1;
    margin-left: -3px;
    padding-left: 10px;
    background: linear-gradient(var(--line), var(--line)) 0 50% / 1px 16px no-repeat;
    white-space: nowrap;
}

.status label {
    padding-left: 10px;
    background: linear-gradient(var(--line), var(--line)) 0 50% / 1px 14px no-repeat;
    font-size: 16px;
}

.status input {
    align-self: flex-end;
    width: 250px;
    height: 23px;
    margin-left: -5px;
    padding: 5px 3px 0;
    border: 1px solid #abb8c8;
    border-bottom: none;
    background: #fff;
    font: inherit;
    font-size: 15px;
    line-height: 17px;
}
```
